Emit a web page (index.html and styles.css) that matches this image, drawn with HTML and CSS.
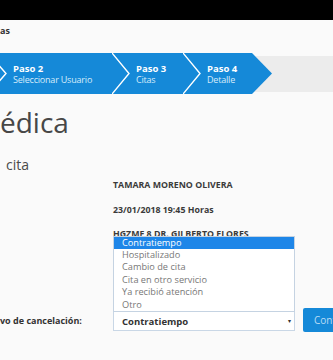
FILE: index.html
```html
<!DOCTYPE html>
<html lang="es">
<head>
    <meta charset="UTF-8">
    <meta name="viewport" content="width=device-width, initial-scale=1.0">
    <title>Cancelar cita</title>
    <link rel="stylesheet" href="styles.css">
</head>
<body>
    <div class="topbar"></div>
    <div class="crumb">as</div>

    <nav class="steps">
        <div class="track">
            <svg class="sep sep-first" width="8" height="41" viewBox="0 0 8 41">
                <polyline points="-12,0 6,20.5 -12,41"/>
            </svg>
            <div class="step step-2">
                <strong>Paso 2</strong>
                <span>Seleccionar Usuario</span>
            </div>
            <svg class="sep" width="20" height="41" viewBox="0 0 20 41">
                <polyline points="0,0 17,20.5 0,41"/>
            </svg>
            <div class="step step-3">
                <strong>Paso 3</strong>
                <span>Citas</span>
            </div>
            <svg class="sep" width="20" height="41" viewBox="0 0 20 41">
                <polyline points="0,0 17,20.5 0,41"/>
            </svg>
            <div class="step step-4">
                <strong>Paso 4</strong>
                <span>Detalle</span>
            </div>
        </div>
    </nav>

    <h1 class="title">édica</h1>
    <h2 class="subtitle">cita</h2>

    <div class="info">
        <p>TAMARA MORENO OLIVERA</p>
        <p>23/01/2018 19:45 Horas</p>
        <p>HGZMF 8 DR. GILBERTO FLORES</p>
    </div>

    <div class="field">
        <label class="field-label">vo de cancelación:</label>
        <div class="select">
            <ul class="options">
                <li class="selected">Contratiempo</li>
                <li>Hospitalizado</li>
                <li>Cambio de cita</li>
                <li>Cita en otro servicio</li>
                <li>Ya recibió atención</li>
                <li>Otro</li>
            </ul>
            <span class="select-value">Contratiempo</span>
            <span class="select-arrow">▾</span>
        </div>
        <button class="btn">Continuar</button>
    </div>
</body>
</html>
```

FILE: styles.css
```css
body {
    margin: 0;
    background-color: #fafafa;
    font-family: "Open Sans", sans-serif;
    color: #444;
    overflow: hidden;
}
.topbar {
    height: 20px;
    background-color: #000;
}
.crumb {
    height: 33px;
    padding-top: 5px;
    box-sizing: border-box;
    font-size: 9px;
    font-weight: bold;
    color: #333;
    line-height: 12px;
}
.steps {
    height: 41px;
    background: linear-gradient(#fafafa 3px, #ececec 3px, #ececec 39px, #fafafa 39px);
}
.track {
    width: 272px;
    height: 41px;
    display: flex;
    background-color: #1589d8;
    clip-path: polygon(0 0, 252px 0, 100% 50%, 252px 100%, 0 100%);
}
.sep {
    flex-shrink: 0;
}
.sep polyline {
    fill: none;
    stroke: #fff;
    stroke-width: 1.4;
}
.step {
    display: flex;
    flex-direction: column;
    justify-content: center;
    flex-shrink: 0;
    color: #fff;
    font-size: 9.5px;
    line-height: 11px;
    padding-left: 5px;
    white-space: nowrap;
}
.step strong {
    font-weight: bold;
}
.step span {
    color: #d6ebfa;
    font-size: 9px;
    letter-spacing: -0.2px;
}
.step-2 {
    width: 99px;
}
.step-3 {
    width: 47px;
    padding-left: 4px;
}
.step-4 {
    padding-left: 4px;
}
.title {
    margin: 11px 0 0;
    font-size: 28px;
    line-height: 34px;
    font-weight: normal;
    color: #474747;
}
.subtitle {
    margin: 17px 0 0;
    padding-left: 6px;
    font-size: 14px;
    line-height: 18px;
    font-weight: normal;
    color: #4a4a4a;
}
.info {
    margin-top: 5px;
    padding-left: 113px;
    display: flex;
    flex-direction: column;
    gap: 12.5px;
}
.info p {
    margin: 0;
    font-size: 8.8px;
    line-height: 12px;
    font-weight: bold;
    color: #3a3a3a;
}
.field {
    margin-top: 68px;
    height: 24px;
    display: flex;
    align-items: center;
}
.field-label {
    flex-shrink: 0;
    width: 113px;
    font-size: 9px;
    font-weight: bold;
    color: #333;
}
.select {
    position: relative;
    flex-shrink: 0;
    width: 182px;
    height: 20px;
    box-sizing: border-box;
    border: 1px solid #c9d7e6;
    background-color: #fff;
    display: flex;
    align-items: center;
    padding-left: 8px;
    margin-top: 2px;
}
.select-value {
    font-size: 9.5px;
    font-weight: bold;
    color: #333;
    flex-grow: 1;
}
.select-arrow {
    font-size: 6px;
    color: #333;
    padding-right: 3px;
}
.options {
    position: absolute;
    left: -1px;
    right: -1px;
    bottom: 100%;
    margin: 0;
    padding: 0;
    list-style: none;
    background-color: #fff;
    border: 1px solid #c5d3e2;
}
.options li {
    height: 12.4px;
    line-height: 12.4px;
    padding-left: 8px;
    font-size: 9.2px;
    color: #777;
}
.options li.selected {
    background-color: #1e86e8;
    color: #fff;
}
.btn {
    margin-left: 8px;
    flex-shrink: 0;
    width: 70px;
    height: 24px;
    border: none;
    border-radius: 2px;
    background-color: #1589d8;
    color: #b9dcf5;
    font-family: "Open Sans", sans-serif;
    font-size: 10px;
    text-align: left;
    padding-left: 11px;
}
```
